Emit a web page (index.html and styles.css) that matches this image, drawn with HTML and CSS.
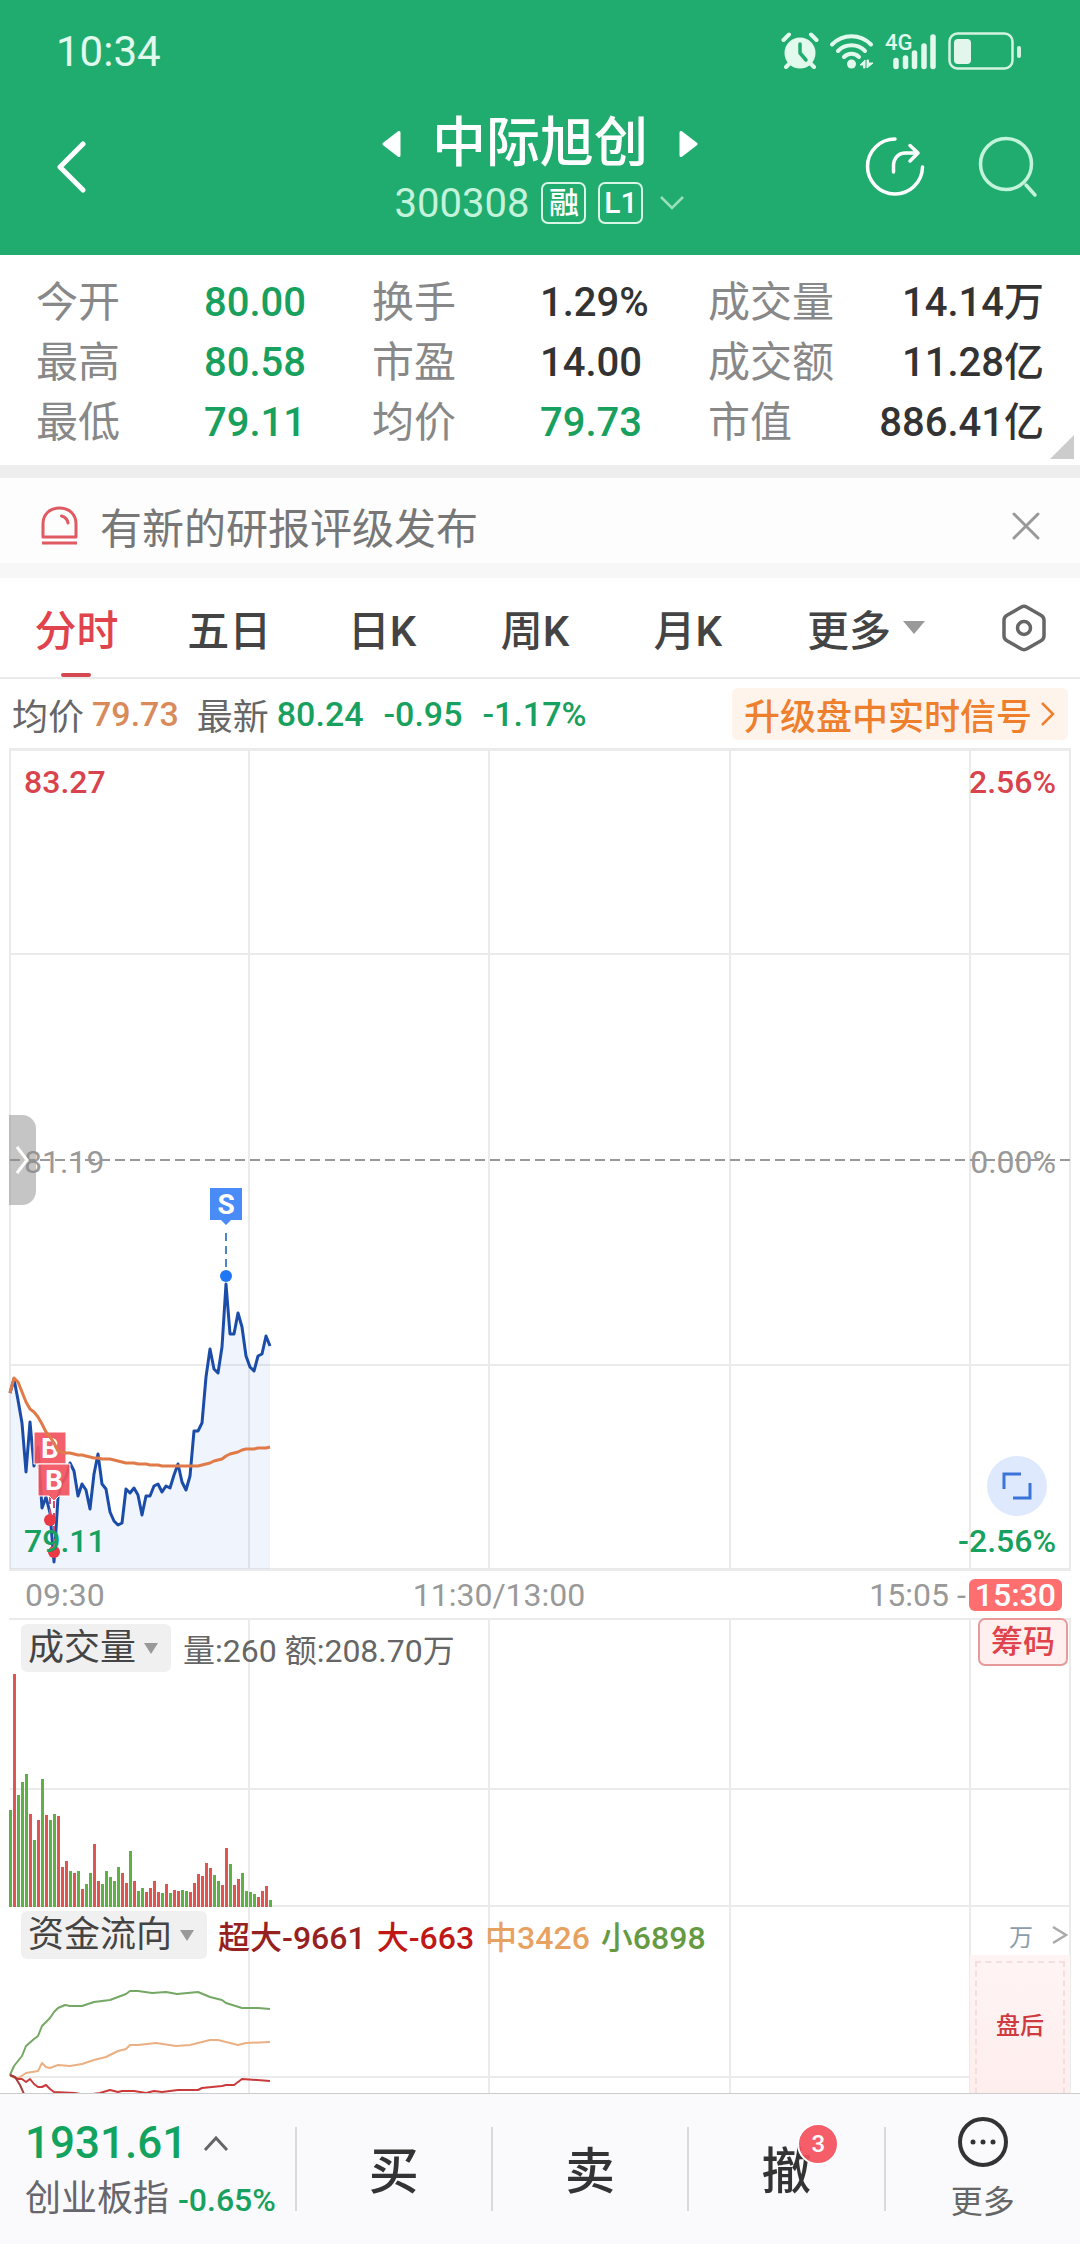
FILE: index.html
```html
<!DOCTYPE html>
<html lang="zh-CN">
<head>
  <meta charset="UTF-8" />
  <meta name="viewport" content="width=device-width, initial-scale=1.0"/>
  <title>中际旭创 300308</title>
  <link rel="stylesheet" href="styles.css">
</head>
<body>
  <header class="header">
    <div class="status-bar">
      <span class="clock">10:34</span>
      <div class="status-icons">
        <svg width="38" height="38" viewBox="0 0 38 38">
          <circle cx="19" cy="21" r="15.500" fill="#e2f9ed"/>
          <path d="M2.500 8 8 2.500M35.500 8 30 2.500M5 35l5-5M33 35l-5-5" stroke="#e2f9ed" stroke-width="4" stroke-linecap="round"/>
          <path d="M19 12v9l6 7" fill="none" stroke="#21ac6f" stroke-width="3.500" stroke-linecap="round" stroke-linejoin="round"/>
        </svg>
        <svg width="46" height="38" viewBox="0 0 46 38">
          <g fill="none" stroke="#e2f9ed" stroke-width="4" stroke-linecap="round">
            <path d="M3 12.500a27 27 0 0 1 39 0"/>
            <path d="M9 19a19 19 0 0 1 27 0"/>
            <path d="M15 25a10.500 10.500 0 0 1 15 0"/>
          </g>
          <circle cx="22.500" cy="32" r="4.500" fill="#e2f9ed"/>
          <path d="M36 28v8h-1.500v-3H31zM38 36v-8l1.500 0v3H44z" fill="#e2f9ed" stroke="#e2f9ed"/>
        </svg>
        <div class="signal">
          <span class="network">4G</span>
          <svg width="52" height="38" viewBox="0 0 52 38">
            <path d="M11 28.500v6M20.500 26v8.500M29.500 21v13.500M39 14v20.500M48 5v29.500" stroke="#e2f9ed" stroke-width="5.500" stroke-linecap="round"/>
          </svg>
        </div>
        <svg width="76" height="38" viewBox="0 0 76 38">
          <rect x="2.500" y="1.500" width="63" height="35" rx="8" fill="none" stroke="#d3f3e2" stroke-width="2.500"/>
          <rect x="7" y="7" width="17" height="25" rx="4" fill="#e2f6ec"/>
          <path d="M72 16v8" stroke="#d3f3e2" stroke-width="4" stroke-linecap="round"/>
        </svg>
      </div>
    </div>
    <div class="title-bar">
      <button class="icon-btn back" aria-label="返回">
        <svg width="32" height="52" viewBox="0 0 32 52"><path d="M27 3 4 26l23 23" fill="none" stroke="#fff" stroke-width="5" stroke-linecap="round" stroke-linejoin="round"/></svg>
      </button>
      <div class="stock">
        <div class="stock-name">
          <button class="icon-btn" aria-label="上一只">
            <svg width="20" height="28" viewBox="0 0 20 28"><path d="M2 14 17 2.500v23z" fill="#fff" stroke="#fff" stroke-width="3" stroke-linejoin="round"/></svg>
          </button>
          <h1>中际旭创</h1>
          <button class="icon-btn" aria-label="下一只">
            <svg width="20" height="28" viewBox="0 0 20 28"><path d="M18 14 3 2.500v23z" fill="#fff" stroke="#fff" stroke-width="3" stroke-linejoin="round"/></svg>
          </button>
        </div>
        <div class="stock-code">
          <span>300308</span>
          <span class="tag">融</span>
          <span class="tag">L1</span>
          <svg class="code-arrow" width="26" height="16" viewBox="0 0 26 16"><path d="m2 2 11 11L24 2" fill="none" stroke="#9adfbd" stroke-width="2.500"/></svg>
        </div>
      </div>
      <div class="title-actions">
        <button class="icon-btn" aria-label="分享">
          <svg width="60" height="60" viewBox="0 0 60 60" fill="none" stroke="#fff" stroke-width="3.500" stroke-linecap="round" stroke-linejoin="round">
            <path d="M30 2a27.500 27.500 0 1 0 27.500 28"/>
            <path d="M28.500 35v-6c0-8 5-13 12-13h11M45 8.500l8 7.500-8 8"/>
          </svg>
        </button>
        <button class="icon-btn" aria-label="搜索">
          <svg width="60" height="64" viewBox="0 0 60 64" fill="none" stroke="#c4f3dc" stroke-width="3.500" stroke-linecap="round">
            <circle cx="28" cy="29" r="25.500"/>
            <path d="m48 50 9 10"/>
          </svg>
        </button>
      </div>
    </div>
  </header>

  <main class="content">
    <section class="quote">
      <table>
        <tr>
          <th scope="row">今开</th><td class="down">80.00</td>
          <th scope="row">换手</th><td>1.29%</td>
          <th scope="row">成交量</th><td class="last">14.14万</td>
        </tr>
        <tr>
          <th scope="row">最高</th><td class="down">80.58</td>
          <th scope="row">市盈</th><td>14.00</td>
          <th scope="row">成交额</th><td class="last">11.28亿</td>
        </tr>
        <tr>
          <th scope="row">最低</th><td class="down">79.11</td>
          <th scope="row">均价</th><td class="down">79.73</td>
          <th scope="row">市值</th><td class="last">886.41亿</td>
        </tr>
      </table>
      <span class="corner"></span>
    </section>

    <section class="notice">
      <svg width="37" height="39" viewBox="0 0 37 39" fill="none" stroke="#e05a62" stroke-width="3">
        <path d="M2 31V18C2 8 9 2 18.500 2S35 8 35 18v13z" stroke-linejoin="round"/>
        <path d="M1 37h35"/>
        <path d="M20.500 10c3.500 1 6 3.500 6.500 7" stroke-linecap="round"/>
      </svg>
      <a href="#">有新的研报评级发布</a>
      <button class="icon-btn" aria-label="关闭">
        <svg width="28" height="28" viewBox="0 0 28 28"><path d="m2 2 24 24M26 2 2 26" stroke="#999" stroke-width="3" stroke-linecap="round"/></svg>
      </button>
    </section>

    <nav class="tabs">
      <button class="tab active">分时</button>
      <button class="tab">五日</button>
      <button class="tab">日K</button>
      <button class="tab">周K</button>
      <button class="tab">月K</button>
      <button class="tab">更多<span class="triangle"></span></button>
      <button class="tab" aria-label="设置">
        <svg width="44" height="48" viewBox="0 0 44 48" fill="none" stroke="#666" stroke-width="3.500">
          <path d="M19 3.200q3-1.700 6 0l14 8q3 1.700 3 5v15.600q0 3.300-3 5l-14 8q-3 1.700-6 0l-14-8q-3-1.700-3-5V16.200q0-3.300 3-5z"/>
          <circle cx="22" cy="24" r="6.500"/>
        </svg>
      </button>
    </nav>

    <div class="info-row">
      <span class="label">均价</span><span class="avg">79.73</span>
      <span class="label latest">最新</span><span class="down">80.24</span>
      <span class="down change">-0.95</span>
      <span class="down change">-1.17%</span>
      <a class="upgrade" href="#">升级盘中实时信号
        <svg width="16" height="26" viewBox="0 0 16 26"><path d="m2 2 11 11L2 24" fill="none" stroke="#ee7f2d" stroke-width="2.500"/></svg>
      </a>
    </div>

    <section class="chart">
      <svg class="plot" viewBox="0 0 1080 823">
        <g class="grid-lines">
          <path d="M9 1.500h1062M9 821.500h1062" stroke-width="3"/>
          <path d="M10 206h1060M10 617h1060M10 1v821M249 1v821M489 1v821M730 1v821M970 1v821M1070 1v821"/>
        </g>
        <path class="zero-line" d="M10 412h1060"/>
        <polygon id="price-area" fill="#2f6fe0" fill-opacity=".08"/>
        <polyline id="price-line" class="line" stroke="#1b4da8" stroke-width="3"/>
        <g stroke-width="2" stroke-dasharray="8 5">
          <path d="M226 485v36" stroke="#4d86c8"/>
          <path d="M50 748v20M54 752v48" stroke="#d64a70"/>
        </g>
        <g class="marker">
          <path d="M210 440h32v32h-11l-5 5-5-5h-11z" fill="#4a8cf7"/>
          <text x="226" y="466">S</text>
          <circle cx="226" cy="528" r="6" fill="#1f77f5"/>
          <path d="M34 684h32v32H34z" fill="#f2535e" fill-opacity=".92" stroke="#fff"/>
          <text x="50" y="710">B</text>
          <path d="M38 716h32v32H59l-5 5-5-5H38z" fill="#f2535e" fill-opacity=".92" stroke="#fff"/>
          <text x="54" y="742">B</text>
          <circle cx="50" cy="772" r="6" fill="#ea3a45"/>
          <circle cx="54" cy="804" r="6" fill="#ea3a45"/>
        </g>
        <polyline id="avg-line" class="line" stroke="#e07a48" stroke-width="3"/>
      </svg>
      <span class="scale top-left up">83.27</span>
      <span class="scale top-right up">2.56%</span>
      <span class="scale mid-left">81.19</span>
      <span class="scale mid-right">0.00%</span>
      <span class="scale bottom-left down">79.11</span>
      <span class="scale bottom-right down">-2.56%</span>
      <button class="drawer" aria-label="展开侧栏">
        <svg width="14" height="30" viewBox="0 0 14 30"><path d="m2 2 10 13L2 28" fill="none" stroke="#fff" stroke-width="3"/></svg>
      </button>
      <button class="expand" aria-label="全屏">
        <svg width="30" height="30" viewBox="0 0 30 30" fill="none" stroke="#3a74d8" stroke-width="3"><path d="M2 18V3h17M28 12v15H11"/></svg>
      </button>
    </section>

    <div class="time-axis">
      <span>09:30</span>
      <span class="noon">11:30/13:00</span>
      <span>15:05 -<span class="after">15:30</span></span>
    </div>

    <section class="volume">
      <svg class="plot" viewBox="0 0 1080 290">
        <g class="grid-lines">
          <path d="M9 1h1062M10 171h1060M10 288h1060M249 1v289M489 1v289M730 1v289M970 1v289M1070 1v289"/>
        </g>
        <g id="volume-bars"></g>
      </svg>
      <div class="panel-head">
        <span class="picker">
          <select aria-label="指标">
            <option>成交量</option>
          </select>
          <span class="triangle small"></span>
        </span>
        <span>量:260 额:208.70万</span>
        <button class="chips-btn">筹码</button>
      </div>
    </section>

    <section class="funds">
      <svg class="plot" viewBox="0 0 1080 240">
        <g class="grid-lines">
          <path d="M10 169h960M249 0v240M489 0v240M730 0v240M970 0v240M1070 0v240"/>
        </g>
        <g class="line" stroke-width="2">
          <polyline stroke="#74a864" points="10,167 14,158 22,148 26,138 34,131 38,128 42,118 50,110 54,104 58,100 65,97 70,98 82,98 94,94 110,92 126,86 130,83 138,83 152,85 166,84 177,86 198,84 210,89 222,92 226,95 242,100 258,100 270,101"/>
          <polyline stroke="#eab083" points="10,167 17,171 26,165 38,163 42,155 46,159 50,160 58,157 70,158 82,156 94,152 106,149 118,143 126,141 130,137 138,137 156,135 176,138 190,137 210,132 218,132 238,137 246,135 270,134"/>
          <polyline stroke="#c93a3a" points="10,167 18,171 22,171 26,174 30,171 34,176 38,179 42,179 46,177 50,181 54,184 75,185 85,187 100,185 110,182 118,184 122,183 134,183 146,185 154,183 162,184 178,182 198,182 202,180 222,178 226,177 234,177 242,171 270,173"/>
          <polyline stroke="#a04038" points="10,167 15,169 20,177 24,186 40,225"/>
        </g>
      </svg>
      <div class="panel-head">
        <span class="picker">
          <select aria-label="指标">
            <option>资金流向</option>
          </select>
          <span class="triangle small"></span>
        </span>
        <span class="flow-huge">超大-9661</span>
        <span class="flow-big">大-663</span>
        <span class="flow-mid">中3426</span>
        <span class="flow-small">小6898</span>
        <span class="unit">万</span>
        <svg width="16" height="20" viewBox="0 0 16 20"><path d="m1 2 13 8-13 8" fill="none" stroke="#aaa" stroke-width="2.500"/></svg>
      </div>
      <div class="after-hours"><span>盘后</span></div>
    </section>
  </main>

  <footer class="trade-bar">
    <button class="index">
      <span class="index-value">1931.61
        <svg width="26" height="18" viewBox="0 0 26 18"><path d="M2 16 13 4l11 12" fill="none" stroke="#666" stroke-width="3"/></svg>
      </span>
      <span class="index-name">创业板指 <span class="index-rate">-0.65%</span></span>
    </button>
    <button class="trade">买</button>
    <button class="trade">卖</button>
    <button class="trade"><span class="cancel">撤<span class="badge">3</span></span></button>
    <button class="trade more">
      <svg width="52" height="52" viewBox="0 0 52 52">
        <circle cx="26" cy="26" r="23" fill="none" stroke="#333" stroke-width="4"/>
        <circle cx="16" cy="26" r="2.500" fill="#333"/>
        <circle cx="26" cy="26" r="2.500" fill="#333"/>
        <circle cx="36" cy="26" r="2.500" fill="#333"/>
      </svg>
      更多
    </button>
  </footer>

  <script src="chart.js"></script>
</body>
</html>
```
FILE: styles.css
```css
* {
  box-sizing: border-box;
}

body {
  margin: 0;
  height: 100vh;
  display: flex;
  flex-direction: column;
  font-family: Roboto, 'Noto Sans CJK SC', sans-serif;
  font-size: 32px;
  color: #333;
  background-color: #fff;
  overflow: hidden;
}

button,
select {
  font: inherit;
  color: inherit;
  border: none;
  background: none;
  padding: 0;
  cursor: pointer;
}

a {
  color: inherit;
  text-decoration: none;
}

svg {
  display: block;
  flex-shrink: 0;
}

.up {
  color: #d8434e;
}

.down {
  color: #18a05e;
}

/* header */
.header {
  background-color: #21ac6f;
  color: #fff;
  padding-bottom: 25px;
}

.status-bar {
  display: flex;
  justify-content: space-between;
  align-items: center;
  height: 104px;
  padding: 0 57px 2px 56px;
}

.clock {
  font-size: 42px;
  color: #e2f9ed;
}

.status-icons {
  display: flex;
  gap: 10px;
}

.signal {
  position: relative;
}

.network {
  position: absolute;
  left: 0;
  top: 0;
  font-size: 22px;
  line-height: 22px;
  font-weight: 500;
  color: #e2f9ed;
}

.title-bar {
  display: grid;
  grid-template-columns: 1fr auto 1fr;
  align-items: center;
  padding: 0 42px;
}

.icon-btn {
  display: flex;
}

.back {
  padding-left: 14px;
}

.stock {
  display: flex;
  flex-direction: column;
  align-items: center;
  padding-top: 8px;
}

.stock-name {
  display: flex;
  align-items: center;
  gap: 30px;
}

h1 {
  margin: 0;
  font-size: 54px;
  line-height: 64px;
  font-weight: 500;
}

.stock-code {
  display: flex;
  align-items: center;
  gap: 12px;
  height: 54px;
  font-size: 40px;
  color: #c4f3dc;
}

.tag {
  width: 45px;
  height: 42px;
  line-height: 38px;
  border: 2px solid #d8f7e7;
  border-radius: 7px;
  font-size: 30px;
  font-weight: 500;
  color: #fff;
  text-align: center;
}

.code-arrow {
  margin-left: 4px;
}

.title-actions {
  display: flex;
  justify-content: flex-end;
  align-items: center;
  gap: 53px;
}

/* content */
.content {
  flex: 1;
  min-height: 0;
  overflow: hidden;
}

.quote {
  position: relative;
  padding: 18px 36px 12px;
  font-size: 42px;
}

.quote table {
  width: 100%;
  table-layout: fixed;
  border-collapse: collapse;
}

.quote th,
.quote td {
  height: 60px;
  padding: 0;
  line-height: 60px;
  text-align: left;
  white-space: nowrap;
}

.quote th {
  font-weight: 400;
  color: #888;
}

.quote td {
  font-size: 40px;
  font-weight: 500;
}

.quote .last {
  text-align: right;
}

.corner {
  position: absolute;
  right: 6px;
  bottom: 6px;
  border-left: 24px solid transparent;
  border-bottom: 24px solid #ccc;
}

.notice {
  display: flex;
  align-items: center;
  gap: 22px;
  height: 113px;
  padding: 10px 40px 0 41px;
  border-top: 13px solid #eee;
  border-bottom: 15px solid #f7f7f7;
  background-color: #fdfdfd;
  font-size: 42px;
  color: #777;
}

.notice .icon-btn {
  margin-left: auto;
}

.tabs {
  display: grid;
  grid-template-columns: repeat(5, 15fr) 20fr 11fr;
  height: 101px;
  border-bottom: 2px solid #ebebeb;
  font-size: 42px;
  font-weight: 500;
  color: #444;
}

.tab {
  display: flex;
  align-items: center;
  justify-content: center;
  position: relative;
}

.tab.active {
  color: #e0434c;
}

.tab.active::after {
  content: "";
  position: absolute;
  bottom: 0;
  width: 30px;
  height: 4px;
  border-radius: 2px;
  background-color: #d44852;
}

.triangle {
  margin-left: 12px;
  border: 11px solid transparent;
  border-top: 13px solid #999;
  border-bottom: none;
}

.triangle.small {
  margin-left: 7px;
  border-width: 11px 7px 0;
}

.info-row {
  display: flex;
  align-items: center;
  height: 69px;
  padding: 0 12px;
  font-size: 34px;
  font-weight: 500;
}

.label {
  margin-right: 8px;
  font-size: 36px;
  font-weight: 400;
  color: #666;
}

.avg {
  color: #d98a5b;
}

.latest {
  margin-left: 18px;
}

.change {
  margin-left: 20px;
}

.upgrade {
  display: flex;
  align-items: center;
  gap: 8px;
  height: 52px;
  margin-left: auto;
  padding: 0 12px;
  border-radius: 6px;
  background-color: #fff4ec;
  font-size: 36px;
  color: #ee7f2d;
}

/* charts */
.chart,
.volume,
.funds {
  position: relative;
}

.plot {
  width: 100%;
  height: auto;
}

.grid-lines {
  fill: none;
  stroke: #ebebeb;
  stroke-width: 2;
}

.zero-line {
  stroke: #999;
  stroke-width: 2;
  stroke-dasharray: 10 5;
}

.line {
  fill: none;
  stroke-linejoin: round;
}

.marker text {
  fill: #fff;
  font-size: 28px;
  font-weight: 700;
  text-anchor: middle;
}

.scale {
  position: absolute;
  font-weight: 500;
  line-height: 32px;
}

.top-left,
.mid-left,
.bottom-left {
  left: 24px;
}

.top-right,
.mid-right,
.bottom-right {
  right: 24px;
}

.top-left,
.top-right {
  top: 18px;
}

.mid-left,
.mid-right {
  top: 50%;
  margin-top: -14px;
  font-weight: 400;
  color: #999;
}

.bottom-left,
.bottom-right {
  bottom: 14px;
}

.drawer {
  position: absolute;
  left: 9px;
  top: 50%;
  width: 27px;
  height: 90px;
  margin-top: -45px;
  padding-left: 6px;
  border-radius: 0 14px 14px 0;
  background-color: rgba(140, 140, 140, 0.5);
}

.expand {
  position: absolute;
  right: 33px;
  bottom: 55px;
  display: flex;
  align-items: center;
  justify-content: center;
  width: 60px;
  height: 60px;
  border-radius: 50%;
  background-color: #dfe9fd;
}

.time-axis {
  display: flex;
  justify-content: space-between;
  align-items: center;
  height: 47px;
  padding: 0 18px 0 25px;
  color: #999;
}

.noon {
  padding-left: 24px;
}

.after {
  display: inline-block;
  margin-left: 3px;
  padding: 0 6px;
  border-radius: 6px;
  line-height: 32px;
  background-color: #ff6f6f;
  font-weight: 500;
  color: #fff;
}

.panel-head {
  position: absolute;
  top: 0;
  left: 21px;
  right: 12px;
  display: flex;
  align-items: center;
  gap: 12px;
  height: 60px;
  color: #666;
}

.picker {
  display: flex;
  align-items: center;
  height: 48px;
  padding: 0 13px 0 7px;
  border-radius: 6px;
  background-color: #f0f0f0;
  font-size: 36px;
  color: #444;
}

.picker select {
  appearance: none;
}

.chips-btn {
  align-self: flex-start;
  width: 90px;
  height: 48px;
  margin-left: auto;
  border: 2px solid #e79a9a;
  border-radius: 7px;
  background-color: #fff0ef;
  font-weight: 500;
  line-height: 44px;
  color: #e0434c;
}

.funds .panel-head {
  gap: 11px;
  height: 54px;
  font-weight: 500;
}

.funds .picker {
  font-weight: 400;
}

.flow-huge {
  color: #96211f;
}

.flow-big {
  color: #c01717;
}

.flow-mid {
  color: #e7a262;
}

.flow-small {
  color: #659a43;
}

.unit {
  margin-left: auto;
  margin-right: 8px;
  font-size: 24px;
  font-weight: 400;
  color: #8d9dab;
}

.after-hours {
  position: absolute;
  top: 47px;
  right: 10px;
  bottom: 0;
  width: 100px;
  padding: 6px 5px;
  background: linear-gradient(#fff4f4, #feebeb);
  font-size: 24px;
  font-weight: 500;
  color: #cf3a3e;
}

.after-hours span {
  display: flex;
  justify-content: center;
  height: 100%;
  padding-top: 43px;
  border: 2px dashed #f5dede;
}

/* bottom bar */
.trade-bar {
  display: grid;
  grid-template-columns: 3fr 2fr 2fr 2fr 2fr;
  align-items: center;
  height: 151px;
  border-top: 1px solid #ccc;
  background-color: #fafafc;
}

.index {
  display: flex;
  flex-direction: column;
  align-items: flex-start;
  min-width: 0;
  padding-left: 25px;
  white-space: nowrap;
}

.index-value {
  display: flex;
  align-items: center;
  gap: 16px;
  font-size: 44px;
  font-weight: 500;
  color: #12a35e;
}

.index-name {
  font-size: 36px;
  color: #66666c;
}

.index-rate {
  font-size: 32px;
  font-weight: 500;
  color: #18a05e;
}

.trade {
  display: flex;
  align-items: center;
  justify-content: center;
  height: 84px;
  padding-bottom: 4px;
  border-left: 2px solid #d9d9dc;
  font-size: 50px;
  font-weight: 500;
}

.cancel {
  position: relative;
}

.badge {
  position: absolute;
  top: -8px;
  right: -28px;
  width: 42px;
  height: 42px;
  border: 2px solid #fff;
  border-radius: 50%;
  background-color: rgba(244, 80, 92, 0.92);
  font-size: 24px;
  line-height: 38px;
  color: #fff;
  text-align: center;
}

.more {
  flex-direction: column;
  gap: 8px;
  padding-bottom: 0;
  font-size: 32px;
  font-weight: 400;
  color: #666;
}
```
FILE: chart.js
```js
// one value per minute, y in plot units
const price = [
  645, 631, 652, 675, 724, 674, 718, 699, 760, 749, 765, 814, 749, 735, 729, 715,
  723, 748, 736, 742, 761, 726, 706, 736, 741, 764, 773, 777, 775, 741, 745, 740,
  747, 767, 748, 748, 738, 736, 744, 738, 740, 727, 716, 734, 742, 728, 683, 683,
  675, 629, 601, 621, 625, 599, 536, 586, 586, 565, 579, 608, 619, 623, 608, 606,
  588, 598
];

const average = [
  645, 630, 634, 644, 654, 661, 664, 669, 676, 684, 689, 695, 703, 704, 705, 705,
  706, 707, 707, 708, 709, 710, 710, 711, 711, 711, 712, 713, 714, 715, 715, 715,
  716, 716, 716, 717, 717, 717, 718, 718, 718, 718, 718, 718, 718, 718, 718, 718,
  717, 716, 715, 713, 712, 711, 708, 706, 705, 704, 702, 701, 701, 701, 700, 700,
  700, 699
];

const volume = [
  97, 233, 112, 125, 133, 93, 67, 87, 128, 92, 87, 93, 91, 40, 46, 36, 34, 36, 18,
  23, 34, 63, 26, 23, 36, 30, 26, 40, 34, 24, 56, 26, 16, 19, 15, 19, 26, 15, 14,
  23, 14, 17, 16, 17, 16, 15, 24, 33, 31, 44, 39, 32, 26, 22, 59, 43, 22, 28, 34,
  16, 15, 13, 10, 16, 21, 7
];

// r = rising minute, g = falling minute
const colors = 'grgggrgrgrggrrrgrgrggrrgggggrrgrggrrrrgrgrrggrrrrrrggrrgrrggggrrrg';

const left = 10;
const step = 4;

function toPoints(values) {
  return values.map((y, i) => `${left + i * step},${y}`).join(' ');
}

const lastX = left + (price.length - 1) * step;

document.getElementById('price-line').setAttribute('points', toPoints(price));
document.getElementById('avg-line').setAttribute('points', toPoints(average));
document.getElementById('price-area').setAttribute('points', `${left},821 ${toPoints(price)} ${lastX},821`);

const bars = document.getElementById('volume-bars');

volume.forEach((height, i) => {
  const bar = document.createElementNS('http://www.w3.org/2000/svg', 'rect');
  bar.setAttribute('x', left - 1 + i * step);
  bar.setAttribute('y', 289 - height);
  bar.setAttribute('width', 3);
  bar.setAttribute('height', height);
  bar.setAttribute('fill', colors[i] === 'r' ? '#e05550' : '#5fb146');
  bars.appendChild(bar);
});
```
